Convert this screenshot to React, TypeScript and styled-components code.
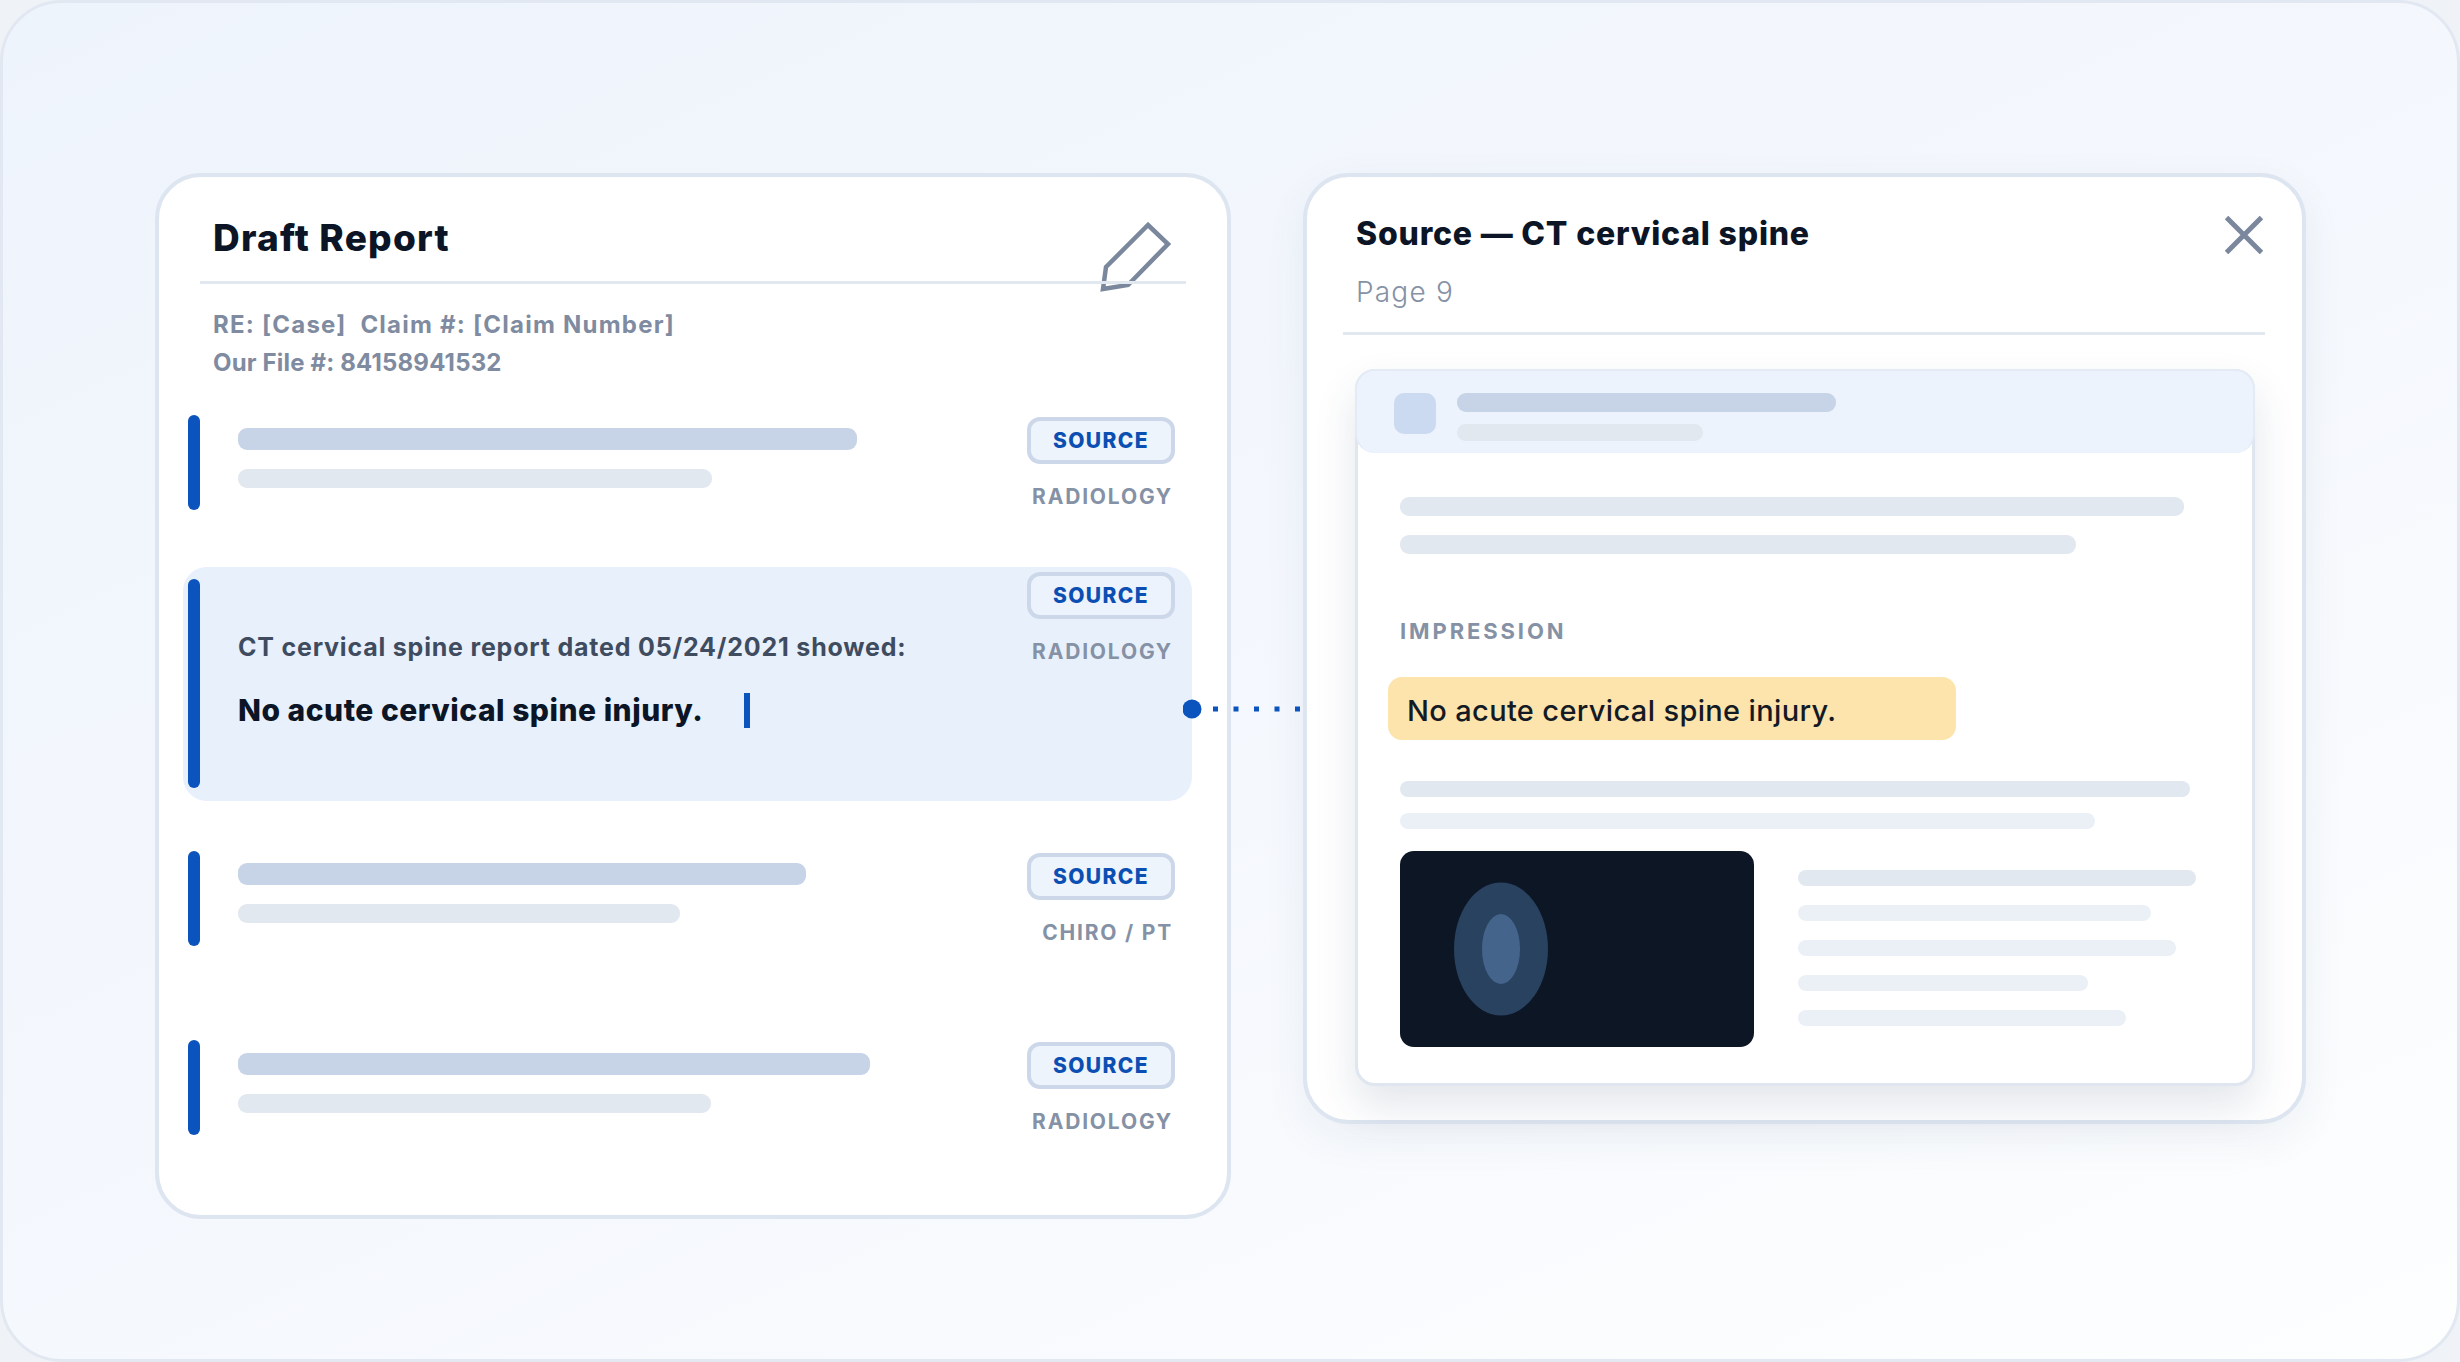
import React from "react";
import styled, { createGlobalStyle } from "styled-components";

const Global = createGlobalStyle`
  html, body { margin: 0; padding: 0; background: #eff2f7; }
  body { font-family: "Inter", "Noto Sans", sans-serif; overflow: hidden; }
  * { box-sizing: border-box; }
`;

const Frame = styled.div`
  position: relative;
  width: 2460px;
  height: 1362px;
  display: flex;
  align-items: flex-start;
  gap: 72px;
  padding: 170px 0 0 152px;
  border: 3px solid #e2e8f1;
  border-radius: 62px;
  background: linear-gradient(155deg, #eef4fc 0%, #f5f8fd 55%, #fdfefe 100%);
`;

const Card = styled.section`
  flex: none;
  background: #fff;
  border: 4px solid #dde5f0;
  border-radius: 46px;
`;

const DraftCard = styled(Card)`
  width: 1076px;
  padding-bottom: 80px;
`;

const SourceCard = styled(Card)`
  width: 1003px;
  height: 951px;
  box-shadow: 0 14px 44px rgba(40, 60, 100, 0.06);
`;

const DraftHead = styled.header`
  position: relative;
  height: 104px;
  padding: 39px 0 0 54px;
`;

const DraftTitle = styled.h1`
  margin: 0;
  font-size: 37px;
  line-height: 44px;
  font-weight: 800;
  letter-spacing: 1.2px;
  color: #0b1526;
`;

const PencilIcon = styled.svg`
  position: absolute;
  left: 941px;
  top: 45px;
  width: 72px;
  height: 72px;
`;

const Rule = styled.div<{ $left: number; $width: number }>`
  position: relative;
  z-index: 1;
  height: 3px;
  margin-left: ${(p) => p.$left}px;
  width: ${(p) => p.$width}px;
  background: #e2e8f0;
`;

const CaseMeta = styled.div`
  margin: 22px 0 0 54px;
`;

const CaseLine = styled.div<{ $spacing: number }>`
  font-size: 24px;
  line-height: 38px;
  font-weight: 700;
  letter-spacing: ${(p) => p.$spacing}px;
  color: #7f8ba0;
  white-space: pre;
`;

const List = styled.div`
  margin: 33px 0 0 24px;
  width: 1009px;
`;

const Row = styled.article<{ $top?: number; $active?: boolean }>`
  display: grid;
  grid-template-columns: 12px 1fr 148px;
  column-gap: 38px;
  margin-top: ${(p) => p.$top ?? 0}px;
  padding: ${(p) => (p.$active ? "5px 17px 0 5px" : "0 17px 0 5px")};
  height: ${(p) => (p.$active ? 234 : 95)}px;
  border-radius: ${(p) => (p.$active ? 24 : 0)}px;
  background: ${(p) => (p.$active ? "#e8f0fb" : "transparent")};
`;

const Bar = styled.div<{ $active?: boolean }>`
  width: 12px;
  height: ${(p) => (p.$active ? 209 : 95)}px;
  margin-top: ${(p) => (p.$active ? 7 : 0)}px;
  border-radius: 6px;
  background: #0b53bd;
`;

const RowBody = styled.div<{ $pad?: number }>`
  padding-top: ${(p) => p.$pad ?? 13}px;
  min-width: 0;
`;

const Skel = styled.div<{ $w: number; $h: number; $tone?: string; $mt?: number }>`
  width: ${(p) => p.$w}px;
  height: ${(p) => p.$h}px;
  margin-top: ${(p) => p.$mt ?? 0}px;
  border-radius: 9px;
  background: ${(p) => p.$tone ?? "#e2e8f0"};
`;

const Lead = styled.p`
  margin: 0;
  font-size: 25px;
  line-height: 36px;
  font-weight: 700;
  letter-spacing: 0.8px;
  color: #3f4c60;
  white-space: nowrap;
`;

const Finding = styled.div`
  display: flex;
  align-items: center;
  margin-top: 27px;
  font-size: 30px;
  line-height: 36px;
  font-weight: 800;
  letter-spacing: 0.5px;
  color: #0b1526;
  white-space: nowrap;
`;

const Caret = styled.span`
  flex: none;
  width: 6px;
  height: 35px;
  margin-left: 41px;
  background: #0b53bd;
`;

const Side = styled.div<{ $active?: boolean }>`
  display: flex;
  flex-direction: column;
  align-items: flex-end;
  padding-top: ${(p) => (p.$active ? 0 : 2)}px;
`;

const SourceBadge = styled.div<{ $active?: boolean }>`
  width: 148px;
  height: 47px;
  display: flex;
  align-items: center;
  justify-content: center;
  border: 4px solid #ccd8ea;
  border-radius: 13px;
  background: ${(p) => (p.$active ? "#edf3fc" : "#eef4fc")};
  color: #0b4fb3;
  font-size: 21px;
  font-weight: 800;
  letter-spacing: 1.4px;
`;

const Category = styled.div`
  margin-top: 18px;
  padding-right: 2px;
  font-size: 21px;
  line-height: 30px;
  font-weight: 700;
  letter-spacing: 1.8px;
  color: #8591a5;
  white-space: nowrap;
`;

const SourceHead = styled.header`
  display: flex;
  justify-content: space-between;
  height: 155px;
  padding: 37px 39px 0 49px;
`;

const SourceTitle = styled.h2`
  margin: 0;
  font-size: 32px;
  line-height: 40px;
  font-weight: 800;
  letter-spacing: 0.8px;
  color: #0b1526;
`;

const PageNo = styled.div`
  margin-top: 20px;
  font-size: 28px;
  line-height: 36px;
  font-weight: 300;
  letter-spacing: 1.2px;
  color: #8591a5;
`;

const CloseIcon = styled.svg`
  flex: none;
  width: 38px;
  height: 38px;
  margin-top: 2px;
`;

const Doc = styled.div`
  width: 900px;
  height: 717px;
  margin: 34px 0 0 48px;
  border: 3px solid #dfe6f0;
  border-radius: 20px;
  background: #fff;
  box-shadow: 0 20px 42px rgba(40, 60, 100, 0.13);
`;

const DocHead = styled.div`
  display: flex;
  gap: 21px;
  height: 84px;
  margin: -3px -3px 0;
  padding: 22px 37px;
  border: 2px solid #e4ebf4;
  border-bottom: 0;
  border-radius: 20px;
  background: #edf3fc;
`;

const DocGlyph = styled.div`
  flex: none;
  width: 42px;
  height: 41px;
  border-radius: 10px;
  background: #cbdaf0;
`;

const DocBody = styled.div`
  padding: 44px 0 0 42px;
`;

const SectionLabel = styled.div`
  margin-top: 63px;
  font-size: 22px;
  line-height: 28px;
  font-weight: 700;
  letter-spacing: 2.9px;
  color: #8591a5;
`;

const Highlight = styled.div`
  display: flex;
  align-items: center;
  width: 568px;
  height: 63px;
  margin: 32px 0 0 -12px;
  padding: 3px 0 0 19px;
  border-radius: 14px;
  background: #fce4ac;
  font-size: 29px;
  font-weight: 500;
  letter-spacing: 0.35px;
  color: #141a24;
`;

const Lower = styled.div`
  display: flex;
  gap: 44px;
  margin-top: 22px;
`;

const ScanImage = styled.svg`
  flex: none;
  width: 354px;
  height: 196px;
  border-radius: 14px;
  background: #0c1625;
`;

const SideLines = styled.div`
  display: flex;
  flex-direction: column;
  gap: 19px;
  padding-top: 19px;
`;

const Connector = styled.svg`
  position: absolute;
  left: 1180px;
  top: 696px;
  width: 125px;
  height: 20px;
`;

const SOFT = "#ebf0f7";
const STRONG = "#c7d4e7";

function Meta({ label, active }: { label: string; active?: boolean }) {
  return (
    <Side $active={active}>
      <SourceBadge $active={active}>SOURCE</SourceBadge>
      <Category>{label}</Category>
    </Side>
  );
}

export default function App() {
  return (
    <>
      <Global />
      <Frame>
        <DraftCard>
          <DraftHead>
            <DraftTitle>Draft Report</DraftTitle>
            <PencilIcon viewBox="0 0 72 72" fill="none">
              <path d="M48 3 L68 22 L28 63 L3 67 L6 45 Z" stroke="#7a879c" strokeWidth="4.5" />
            </PencilIcon>
          </DraftHead>
          <Rule $left={41} $width={986} />
          <CaseMeta>
            <CaseLine $spacing={1.23}>{"RE: [Case]  Claim #: [Claim Number]"}</CaseLine>
            <CaseLine $spacing={0.17}>Our File #: 84158941532</CaseLine>
          </CaseMeta>
          <List>
            <Row>
              <Bar />
              <RowBody>
                <Skel $w={619} $h={22} $tone={STRONG} />
                <Skel $w={474} $h={19} $mt={19} />
              </RowBody>
              <Meta label="RADIOLOGY" />
            </Row>
            <Row $top={57} $active>
              <Bar $active />
              <RowBody $pad={57}>
                <Lead>CT cervical spine report dated 05/24/2021 showed:</Lead>
                <Finding>
                  No acute cervical spine injury.
                  <Caret />
                </Finding>
              </RowBody>
              <Meta label="RADIOLOGY" active />
            </Row>
            <Row $top={50}>
              <Bar />
              <RowBody $pad={12}>
                <Skel $w={568} $h={22} $tone={STRONG} />
                <Skel $w={442} $h={19} $mt={19} />
              </RowBody>
              <Meta label="CHIRO / PT" />
            </Row>
            <Row $top={94}>
              <Bar />
              <RowBody>
                <Skel $w={632} $h={22} $tone={STRONG} />
                <Skel $w={473} $h={19} $mt={19} />
              </RowBody>
              <Meta label="RADIOLOGY" />
            </Row>
          </List>
        </DraftCard>

        <SourceCard>
          <SourceHead>
            <div>
              <SourceTitle>Source — CT cervical spine</SourceTitle>
              <PageNo>Page 9</PageNo>
            </div>
            <CloseIcon viewBox="0 0 38 38" fill="none">
              <path d="M1.5 1.5 L36.5 36.5 M36.5 1.5 L1.5 36.5" stroke="#7a879c" strokeWidth="5" />
            </CloseIcon>
          </SourceHead>
          <Rule $left={36} $width={922} />
          <Doc>
            <DocHead>
              <DocGlyph />
              <div>
                <Skel $w={379} $h={19} $tone={STRONG} />
                <Skel $w={246} $h={17} $mt={12} />
              </div>
            </DocHead>
            <DocBody>
              <Skel $w={784} $h={19} />
              <Skel $w={676} $h={19} $mt={19} />
              <SectionLabel>IMPRESSION</SectionLabel>
              <Highlight>No acute cervical spine injury.</Highlight>
              <Skel $w={790} $h={16} $mt={41} />
              <Skel $w={695} $h={16} $mt={16} $tone={SOFT} />
              <Lower>
                <ScanImage viewBox="0 0 354 196">
                  <ellipse cx="101" cy="98" rx="47" ry="66.5" fill="#29425f" />
                  <ellipse cx="101" cy="98" rx="19" ry="35" fill="#44648c" />
                </ScanImage>
                <SideLines>
                  <Skel $w={398} $h={16} />
                  <Skel $w={353} $h={16} $tone={SOFT} />
                  <Skel $w={378} $h={16} $tone={SOFT} />
                  <Skel $w={290} $h={16} $tone={SOFT} />
                  <Skel $w={328} $h={16} $tone={SOFT} />
                </SideLines>
              </Lower>
            </DocBody>
          </Doc>
        </SourceCard>

        <Connector viewBox="0 0 125 20" fill="#0b53bd">
          <circle cx="9" cy="10" r="9.5" />
          <rect x="30" y="7.5" width="5" height="5" />
          <rect x="50.5" y="7.5" width="5" height="5" />
          <rect x="71" y="7.5" width="5" height="5" />
          <rect x="91.5" y="7.5" width="5" height="5" />
          <rect x="112" y="7.5" width="5" height="5" />
        </Connector>
      </Frame>
    </>
  );
}
